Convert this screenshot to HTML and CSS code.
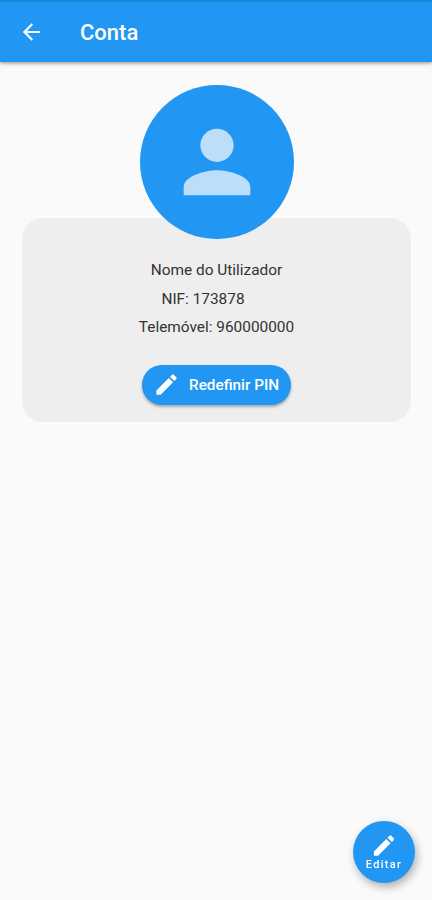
FILE: index.html
```
<!DOCTYPE html>
<html lang="pt">

<head>
    <meta charset="UTF-8" />
    <meta name="viewport" content="width=device-width, initial-scale=1.0" />
    <title>Conta</title>
    <link rel="stylesheet" href="styles.css">
</head>

<body>
    <header class="app-bar">
        <svg class="back" viewBox="0 0 24 24"><path d="M20 11H7.83l5.59-5.59L12 4l-8 8 8 8 1.41-1.41L7.83 13H20v-2z" /></svg>
        <h1>Conta</h1>
    </header>

    <main class="profile">
        <div class="avatar">
            <svg viewBox="0 0 24 24"><path d="M12 12c2.21 0 4-1.79 4-4s-1.79-4-4-4-4 1.79-4 4 1.79 4 4 4zm0 2c-2.67 0-8 1.34-8 4v2h16v-2c0-2.66-5.33-4-8-4z" /></svg>
        </div>
        <section class="card">
            <p class="name">Nome do Utilizador</p>
            <p class="nif">NIF: 173878</p>
            <p class="phone">Telemóvel: 960000000</p>
            <button class="pin-button">
                <svg viewBox="0 0 24 24"><path d="M3 17.25V21h3.75L17.81 9.94l-3.75-3.75L3 17.25zM20.71 7.04c.39-.39.39-1.02 0-1.41l-2.34-2.34c-.39-.39-1.02-.39-1.41 0l-1.83 1.83 3.75 3.75 1.83-1.83z" /></svg>
                <span>Redefinir PIN</span>
            </button>
        </section>
    </main>

    <!-- Botão flutuante -->
    <button class="fab">
        <svg viewBox="0 0 24 24"><path d="M3 17.25V21h3.75L17.81 9.94l-3.75-3.75L3 17.25zM20.71 7.04c.39-.39.39-1.02 0-1.41l-2.34-2.34c-.39-.39-1.02-.39-1.41 0l-1.83 1.83 3.75 3.75 1.83-1.83z" /></svg>
        <span>Editar</span>
    </button>
</body>

</html>
```
FILE: styles.css
```
body {
    margin: 0;
    height: 100vh;
    background: #fafafa;
    font-family: Roboto, sans-serif;
    color: #333;
    overflow: hidden;
}

svg {
    display: block;
    flex-shrink: 0;
    fill: #fff;
}

button {
    border: none;
    padding: 0;
    background: #2196f3;
    color: #fff;
    font-family: inherit;
    font-weight: 500;
    cursor: pointer;
}

.app-bar {
    display: flex;
    align-items: center;
    box-sizing: border-box;
    height: 62px;
    padding: 2px 18px 0;
    border-top: 2px solid #1e88d9;
    background: #2196f3;
    box-shadow: 0 1px 4px rgba(0, 0, 0, 0.45);
}

.back {
    width: 27px;
    height: 26px;
    margin-bottom: 2px;
}

.app-bar h1 {
    margin: 0 0 0 35px;
    font-size: 22px;
    font-weight: 500;
    line-height: 26px;
    color: #fff;
}

.profile {
    display: flex;
    flex-direction: column;
    align-items: center;
    padding: 23px 21px 0 22px;
}

.avatar {
    display: flex;
    align-items: center;
    justify-content: center;
    width: 154px;
    height: 154px;
    border-radius: 50%;
    background: #2196f3;
    z-index: 1;
}

.avatar svg {
    width: 100px;
    height: 100px;
    fill: #bbdefb;
}

.card {
    display: flex;
    flex-direction: column;
    align-items: center;
    box-sizing: border-box;
    width: 100%;
    height: 204px;
    margin-top: -21px;
    padding-top: 38px;
    border-radius: 21px;
    background: #eee;
}

.card p {
    margin: 0;
    font-size: 15.4px;
    line-height: 28.5px;
    white-space: nowrap;
}

.card .nif {
    padding-right: 27px;
}

.pin-button {
    display: flex;
    align-items: center;
    box-sizing: border-box;
    width: 149px;
    height: 40px;
    margin-top: 23px;
    padding-left: 11px;
    border-radius: 20px;
    font-size: 15.3px;
    box-shadow: 0 2px 3px rgba(0, 0, 0, 0.3);
}

.pin-button svg {
    width: 27px;
    height: 27px;
    margin-right: 9px;
}

.fab {
    position: fixed;
    right: 17px;
    bottom: 17px;
    display: flex;
    flex-direction: column;
    align-items: center;
    width: 62px;
    height: 62px;
    padding-top: 11px;
    box-sizing: border-box;
    border-radius: 50%;
    font-size: 11px;
    line-height: 12px;
    letter-spacing: 1.3px;
    box-shadow: 2px 4px 8px rgba(0, 0, 0, 0.3);
}

.fab svg {
    width: 28px;
    height: 27px;
}
```
